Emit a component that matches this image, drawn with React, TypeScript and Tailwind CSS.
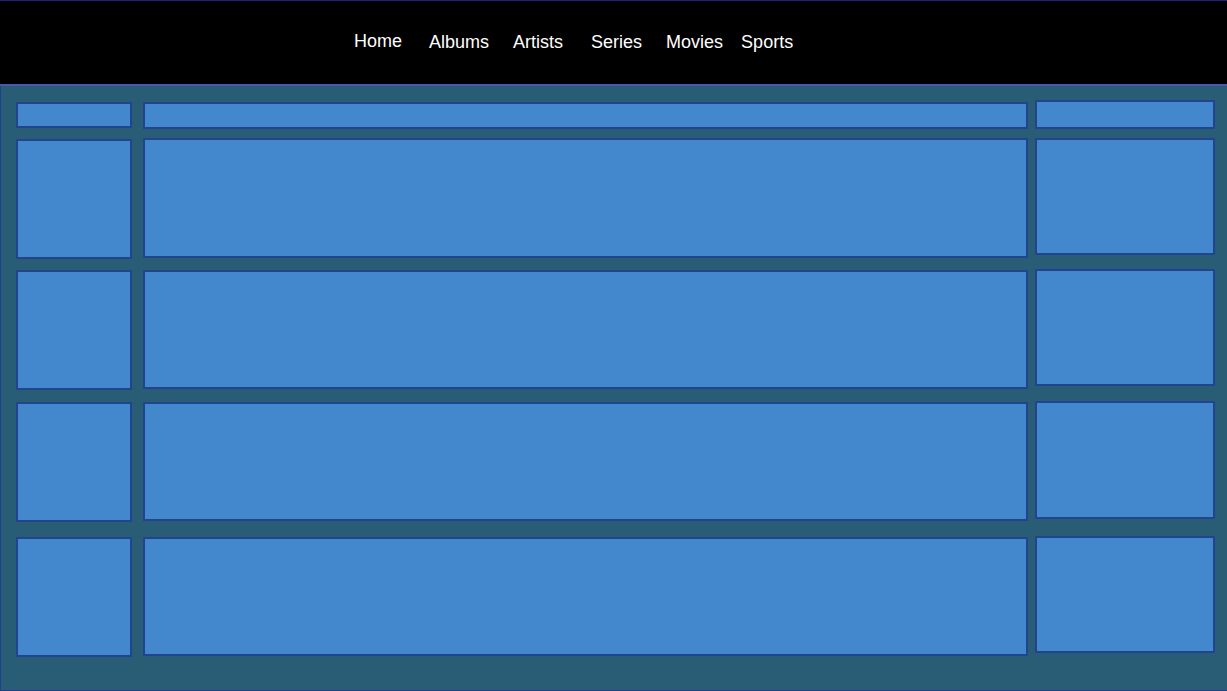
import React from "react";

const box = "border-2 border-[#22448f] bg-[#4387cc] box-border";

export default function App() {
  const nav = [
    { t: "Home", ml: "ml-[354px]", y: "-translate-y-[2px]" },
    { t: "Albums", ml: "ml-[27px]", y: "-translate-y-px" },
    { t: "Artists", ml: "ml-[24px]", y: "-translate-y-px" },
    { t: "Series", ml: "ml-[28px]", y: "-translate-y-px" },
    { t: "Movies", ml: "ml-[24px]", y: "-translate-y-px" },
    { t: "Sports", ml: "ml-[18px]", y: "-translate-y-px" },
  ];
  return (
    <div className="w-[1227px] h-[691px] flex flex-col overflow-hidden" style={{ fontFamily: '"Liberation Sans", Arial, sans-serif' }}>
      <header className="h-[86px] shrink-0 bg-black border-t border-[#1a237e] border-b-2 border-b-[#4b58a8] flex items-center">
        {nav.map((n) => (
          <span key={n.t} className={`${n.ml} ${n.y} text-[18px] text-white leading-none`}>
            {n.t}
          </span>
        ))}
      </header>
      <main className="flex-1 bg-[#295d75] border-l border-b border-[#213f8a] flex pl-[15px] pt-[14px]">
        <div className="w-[116px] flex flex-col">
          <div className={`${box} h-[26px] mt-[2px]`} />
          <div className={`${box} h-[120px] mt-[11px]`} />
          <div className={`${box} h-[120px] mt-[11px]`} />
          <div className={`${box} h-[120px] mt-[12px]`} />
          <div className={`${box} h-[120px] mt-[15px]`} />
        </div>
        <div className="w-[885px] ml-[11px] flex flex-col">
          <div className={`${box} h-[27px] mt-[2px]`} />
          <div className={`${box} h-[120px] mt-[9px]`} />
          <div className={`${box} h-[119px] mt-[12px]`} />
          <div className={`${box} h-[119px] mt-[13px]`} />
          <div className={`${box} h-[119px] mt-[16px]`} />
        </div>
        <div className="w-[180px] ml-[7px] flex flex-col">
          <div className={`${box} h-[29px]`} />
          <div className={`${box} h-[117px] mt-[9px]`} />
          <div className={`${box} h-[117px] mt-[14px]`} />
          <div className={`${box} h-[118px] mt-[15px]`} />
          <div className={`${box} h-[117px] mt-[17px]`} />
        </div>
      </main>
    </div>
  );
}
